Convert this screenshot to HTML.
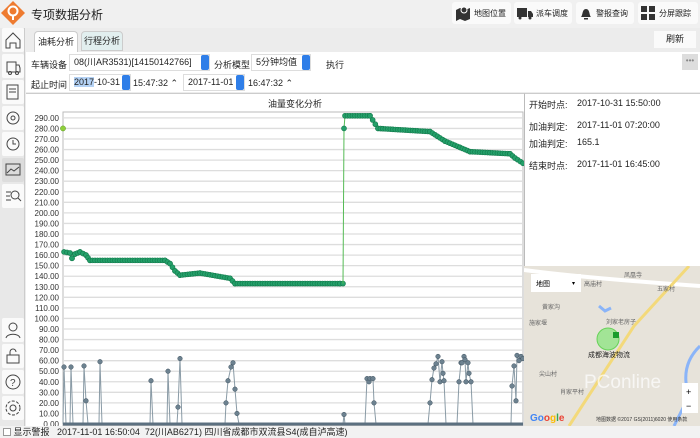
<!DOCTYPE html><html><head><meta charset="utf-8"><style>
*{box-sizing:border-box;margin:0;padding:0}
body{width:700px;height:438px;overflow:hidden;background:#ececec;font-family:"Liberation Sans","Noto Sans CJK SC",sans-serif;font-size:9px;color:#222;position:relative}
.a{position:absolute;white-space:nowrap}
.btn{position:absolute;top:2px;height:22px;background:#fafafa;border-radius:3px;font-size:8px;display:flex;align-items:center;padding:0 3px;gap:3px;white-space:nowrap}
.sb{position:absolute;left:2px;width:22px;height:24px;background:#fafafa;border-radius:2px}
.in{position:absolute;height:17px;background:#fff;border:1px solid #ddd;font-size:9px;line-height:15px;padding-left:4px;white-space:nowrap}
.sel{position:absolute;right:0;top:0;width:8px;height:100%;background:#2f7ee8;border-radius:2px}
</style></head><body>
<div class="a" style="left:0;top:0;width:700px;height:28px;background:#f0f0f0"></div>
<svg class="a" style="left:0;top:0" width="26" height="26"><path d="M13 1 L25 13 L13 25 L1 13Z" fill="#ee7b30"/><circle cx="13" cy="11" r="4.5" fill="none" stroke="#fff" stroke-width="2"/><path d="M13 15v5" stroke="#fff" stroke-width="2"/></svg>
<div class="a" style="left:31px;top:6px;font-size:12px;color:#222">专项数据分析</div>
<div class="btn" style="left:452px;width:59px"><svg width="16" height="16"><path d="M1 5l4-2 5 2 5-2v11l-5 2-5-2-4 2z" fill="#333"/><circle cx="9" cy="5" r="3.5" fill="#fff"/><circle cx="9" cy="5" r="2.5" fill="#333"/></svg>地图位置</div>
<div class="btn" style="left:514px;width:58px"><svg width="16" height="14"><rect x="0" y="2" width="10" height="9" fill="#333"/><path d="M11 5h3l2 3v3h-5z" fill="#333"/><circle cx="3" cy="12" r="1.5" fill="#333"/><circle cx="13" cy="12" r="1.5" fill="#333"/></svg>派车调度</div>
<div class="btn" style="left:576px;width:58px"><svg width="14" height="14"><path d="M2 11c2-2 1-8 5-8s3 6 5 8z" fill="#333"/><rect x="5" y="12" width="4" height="1.5" fill="#333"/></svg>警报查询</div>
<div class="btn" style="left:638px;width:60px"><svg width="15" height="15"><rect x="0" y="0" width="6" height="6" fill="#333"/><rect x="8" y="0" width="6" height="6" fill="#333"/><rect x="0" y="8" width="6" height="6" fill="#333"/><rect x="8" y="8" width="6" height="6" fill="#333"/></svg>分屏跟踪</div>
<div class="a" style="left:0;top:28px;width:25px;height:398px;background:#e8e8e8;border-right:1px solid #ccc"></div>
<div class="sb" style="top:28px"><svg width="22" height="24"><path d="M4 12l7-7 7 7v8h-4v-5h-6v5H4z" fill="none" stroke="#444"/></svg></div>
<div class="sb" style="top:54px"><svg width="22" height="24"><path d="M5 8h9v10H5zM14 11h3l1 3v4h-4" fill="none" stroke="#444"/><circle cx="8" cy="19" r="1.5" fill="none" stroke="#444"/><circle cx="15" cy="19" r="1.5" fill="none" stroke="#444"/></svg></div>
<div class="sb" style="top:80px"><svg width="22" height="24"><path d="M5 5h11v14H5zM7 9h7M7 12h7" fill="none" stroke="#444"/></svg></div>
<div class="sb" style="top:106px"><svg width="22" height="24"><circle cx="11" cy="12" r="6" fill="none" stroke="#444"/><circle cx="11" cy="12" r="2" fill="none" stroke="#444"/></svg></div>
<div class="sb" style="top:132px"><svg width="22" height="24"><circle cx="11" cy="12" r="6" fill="none" stroke="#444"/><path d="M11 8v4h3" fill="none" stroke="#444"/></svg></div>
<div class="sb" style="top:158px;background:#dcdcdc"><svg width="22" height="24"><rect x="4" y="6" width="14" height="11" fill="none" stroke="#444"/><path d="M5 15l4-4 3 2 5-4" fill="none" stroke="#444"/></svg></div>
<div class="sb" style="top:184px"><svg width="22" height="24"><path d="M4 8h5M4 12h4M4 16h5" stroke="#444"/><circle cx="13" cy="11" r="4" fill="none" stroke="#444"/><path d="M16 14l3 3" stroke="#444"/></svg></div>
<div class="sb" style="top:318px"><svg width="22" height="24"><circle cx="11" cy="9" r="4" fill="none" stroke="#444"/><path d="M4 20c1-5 13-5 14 0" fill="none" stroke="#444"/></svg></div>
<div class="sb" style="top:344px"><svg width="22" height="24"><rect x="5" y="11" width="12" height="8" fill="none" stroke="#444"/><path d="M8 11V8a3 3 0 0 1 6 0" fill="none" stroke="#444"/></svg></div>
<div class="sb" style="top:370px"><svg width="22" height="24"><circle cx="11" cy="12" r="7" fill="none" stroke="#444"/><text x="8" y="16" font-size="10" fill="#444">?</text></svg></div>
<div class="sb" style="top:396px"><svg width="22" height="24"><circle cx="11" cy="12" r="7" fill="none" stroke="#444" stroke-dasharray="3 1.5"/><circle cx="11" cy="12" r="3" fill="none" stroke="#444"/></svg></div>
<div class="a" style="left:34px;top:31px;width:44px;height:21px;background:#fff;border:1px solid #ccc;border-bottom:none;border-radius:4px 4px 0 0;font-size:9px;text-align:center;line-height:20px">油耗分析</div>
<div class="a" style="left:81px;top:31px;width:42px;height:20px;background:#e2efef;border:1px solid #ccc;border-radius:4px 4px 0 0;font-size:9px;text-align:center;line-height:19px">行程分析</div>
<div class="a" style="left:654px;top:31px;width:42px;height:17px;background:#fafafa;font-size:9px;text-align:center;line-height:17px">刷新</div>
<div class="a" style="left:26px;top:52px;width:674px;height:40px;background:#fff"></div>
<div class="a" style="left:682px;top:54px;width:16px;height:16px;background:#ddd;color:#888;font-size:8px;text-align:center;line-height:14px">•••</div>
<div class="a" style="left:31px;top:58px">车辆设备</div>
<div class="in" style="left:69px;top:54px;width:141px">08(川AR3531)[14150142766]<div class="sel"></div></div>
<div class="a" style="left:214px;top:58px">分析模型</div>
<div class="in" style="left:251px;top:54px;width:60px">5分钟均值<div class="sel"></div></div>
<div class="a" style="left:326px;top:58px">执行</div>
<div class="a" style="left:31px;top:78px">起止时间</div>
<div class="in" style="left:69px;top:74px;width:62px"><span style="background:#b4d2f5">2017</span>-10-31<div class="sel"></div></div>
<div class="a" style="left:133px;top:78px">15:47:32 ⌃</div>
<div class="in" style="left:183px;top:74px;width:62px">2017-11-01<div class="sel"></div></div>
<div class="a" style="left:248px;top:78px">16:47:32 ⌃</div>
<div class="a" style="left:26px;top:93px;width:498px;height:333px;background:#fff;border-top:1px solid #ccc"></div>
<div class="a" style="left:268px;top:97px;font-size:9px">油量变化分析</div>
<svg class="a" style="left:26px;top:93px" width="498" height="333" id="ch"></svg>
<div class="a" style="left:524px;top:93px;width:176px;height:173px;background:#fff;border-left:1px solid #bbb;border-top:1px solid #ccc;font-size:9px">
<div class="a" style="left:4px;top:4px">开始时点:</div><div class="a" style="left:52px;top:4px">2017-10-31 15:50:00</div>
<div class="a" style="left:4px;top:26px">加油判定:</div><div class="a" style="left:52px;top:26px">2017-11-01 07:20:00</div>
<div class="a" style="left:4px;top:43px">加油判定:</div><div class="a" style="left:52px;top:43px">165.1</div>
<div class="a" style="left:4px;top:65px">结束时点:</div><div class="a" style="left:52px;top:65px">2017-11-01 16:45:00</div>
</div>
<svg class="a" style="left:524px;top:266px" width="176" height="160">
<rect width="176" height="160" fill="#e7e3da"/>
<path d="M0 4 Q60 12 176 20" stroke="#fff" stroke-width="4" fill="none"/>
<path d="M45 160 L110 60 L165 0" stroke="#f3d97a" stroke-width="3" fill="none"/>
<path d="M176 80 Q155 100 165 130 L150 160" stroke="#8ab4f8" stroke-width="3" fill="none"/>
<path d="M75 40 l6 5 6-3" stroke="#8ab4f8" stroke-width="3" fill="none"/>
<rect x="7" y="8" width="50" height="18" fill="#fff"/><text x="12" y="20" font-size="7">地图</text><text x="48" y="19" font-size="6">▾</text>
<circle cx="84" cy="73" r="11" fill="#9be58f" stroke="#5ad14b" opacity=".9"/><rect x="89" y="66" width="6" height="6" fill="#1a9d2c"/>
<text x="64" y="91" font-size="7" fill="#222">成都海波物流</text>
<text x="60" y="20" font-size="6" fill="#666">高庙村</text><text x="100" y="11" font-size="6" fill="#666">凤凰寺</text><text x="133" y="25" font-size="6" fill="#666">五家村</text>
<text x="18" y="43" font-size="6" fill="#666">黄家沟</text><text x="5" y="59" font-size="6" fill="#666">施家堰</text><text x="82" y="58" font-size="6" fill="#666">刘家老房子</text>
<text x="15" y="110" font-size="6" fill="#666">尖山村</text><text x="36" y="128" font-size="6" fill="#666">肖家平村</text>
<text x="60" y="122" font-size="19" fill="#fff" opacity=".7">PConline</text>
<rect x="158" y="117" width="16" height="30" fill="#fff"/><text x="162" y="129" font-size="9">+</text><text x="162" y="143" font-size="9">−</text>
<text x="6" y="155" font-size="10" font-weight="bold" fill="#4285f4">Go<tspan fill="#ea4335">o</tspan><tspan fill="#fbbc05">g</tspan><tspan fill="#34a853">l</tspan><tspan fill="#ea4335">e</tspan></text>
<text x="72" y="155" font-size="5" fill="#333">地图数据 ©2017 GS(2011)6020 使用条款</text>
</svg>
<div class="a" style="left:0;top:426px;width:700px;height:12px;background:#f2f2f2;font-size:9px;line-height:12px;padding-left:3px"><span style="display:inline-block;width:8px;height:8px;border:1px solid #999;background:#fff;vertical-align:-1px"></span> 显示警报 &nbsp; 2017-11-01 16:50:04 &nbsp;72(川AB6271) 四川省成都市双流县S4(成自泸高速)</div>
<script>
var s=document.getElementById('ch'),h='',ox=26,oy=93;
function Y(v){return 424-v*1.0556-oy}
h+='<rect x="37" y="19" width="460" height="314" fill="none" stroke="#bbb"/>';
for(var v=0;v<=290;v+=10){var y=Y(v);h+='<line x1="37" x2="497" y1="'+y+'" y2="'+y+'" stroke="#ddd" stroke-width="1.3"/><text x="33" y="'+(y+3)+'" font-size="8" text-anchor="end" fill="#333">'+v+'.00</text>'}
h+='<circle cx="'+(63-ox)+'" cy="'+Y(280)+'" r="2.6" fill="#8fcf3a" stroke="#5a9a20" stroke-width=".5"/>';
function ser(p,col,lc,step){var pts=p.map(function(q){return (q[0]-ox)+','+Y(q[1])}).join(' ');h+='<polyline points="'+pts+'" fill="none" stroke="'+lc+'"/>';
for(var i=0;i<p.length-1;i++){var a=p[i],b=p[i+1],n=Math.max(1,Math.round((b[0]-a[0])/step));for(var k=0;k<=n;k++){var t=k/n,x=a[0]+(b[0]-a[0])*t,v=a[1]+(b[1]-a[1])*t;h+='<circle cx="'+(x-ox)+'" cy="'+Y(v)+'" r="2.5" fill="'+col+'" stroke="#137a4c" stroke-width=".6"/>'}}}
ser([[64,163],[70,162],[72,157],[75,161],[80,163],[86,160],[90,155],[165,155],[170,152],[175,145],[180,141],[200,143],[230,138],[235,133],[340,133],[343,133]],'#24a06a','#4a9',2.5);
h+='<polyline points="'+(343-ox)+','+Y(133)+' '+(344-ox)+','+Y(280)+' '+(345-ox)+','+Y(292)+'" fill="none" stroke="#5b5"/>';
ser([[345,292],[370,292],[378,280],[430,277],[445,268],[460,262],[470,258],[510,256],[515,252],[523,247]],'#24a06a','#4a9',2.5);
h+='<circle cx="'+(344-ox)+'" cy="'+Y(280)+'" r="2.5" fill="#24a06a" stroke="#137a4c" stroke-width=".6"/>';
var g=[[63,0],[64,54],[66,0],[70,0],[71,54],[73,0],[83,0],[84,55],[86,22],[88,0],[99,0],[100,59],[102,0],[150,0],[151,41],[153,0],[167,0],[168,50],[170,0],[177,0],[178,16],[180,62],[182,0],[225,0],[226,20],[228,41],[231,54],[233,58],[235,33],[237,10],[239,0],[343,0],[344,9],[345,0],[365,0],[367,43],[369,40],[370,43],[373,43],[374,20],[376,0],[428,0],[430,20],[432,42],[434,53],[436,57],[438,64],[440,40],[442,59],[443,48],[444,41],[446,0],[457,0],[459,40],[461,58],[462,58],[464,64],[465,61],[466,40],[468,58],[469,48],[471,40],[473,0],[511,0],[512,36],[514,55],[516,22],[517,65],[519,60],[521,64],[523,62]];
var pts=g.map(function(q){return (q[0]-ox)+','+Y(q[1])}).join(' ');h+='<polyline points="'+pts+'" fill="none" stroke="#8a9ba6"/><line x1="37" x2="497" y1="'+Y(0)+'" y2="'+Y(0)+'" stroke="#5c7080" stroke-width="3"/>';
g.forEach(function(q){if(q[1]>0)h+='<circle cx="'+(q[0]-ox)+'" cy="'+Y(q[1])+'" r="2.3" fill="#6d8290" stroke="#3f5260" stroke-width=".5"/>'});
s.innerHTML=h;
</script>
</body></html>
